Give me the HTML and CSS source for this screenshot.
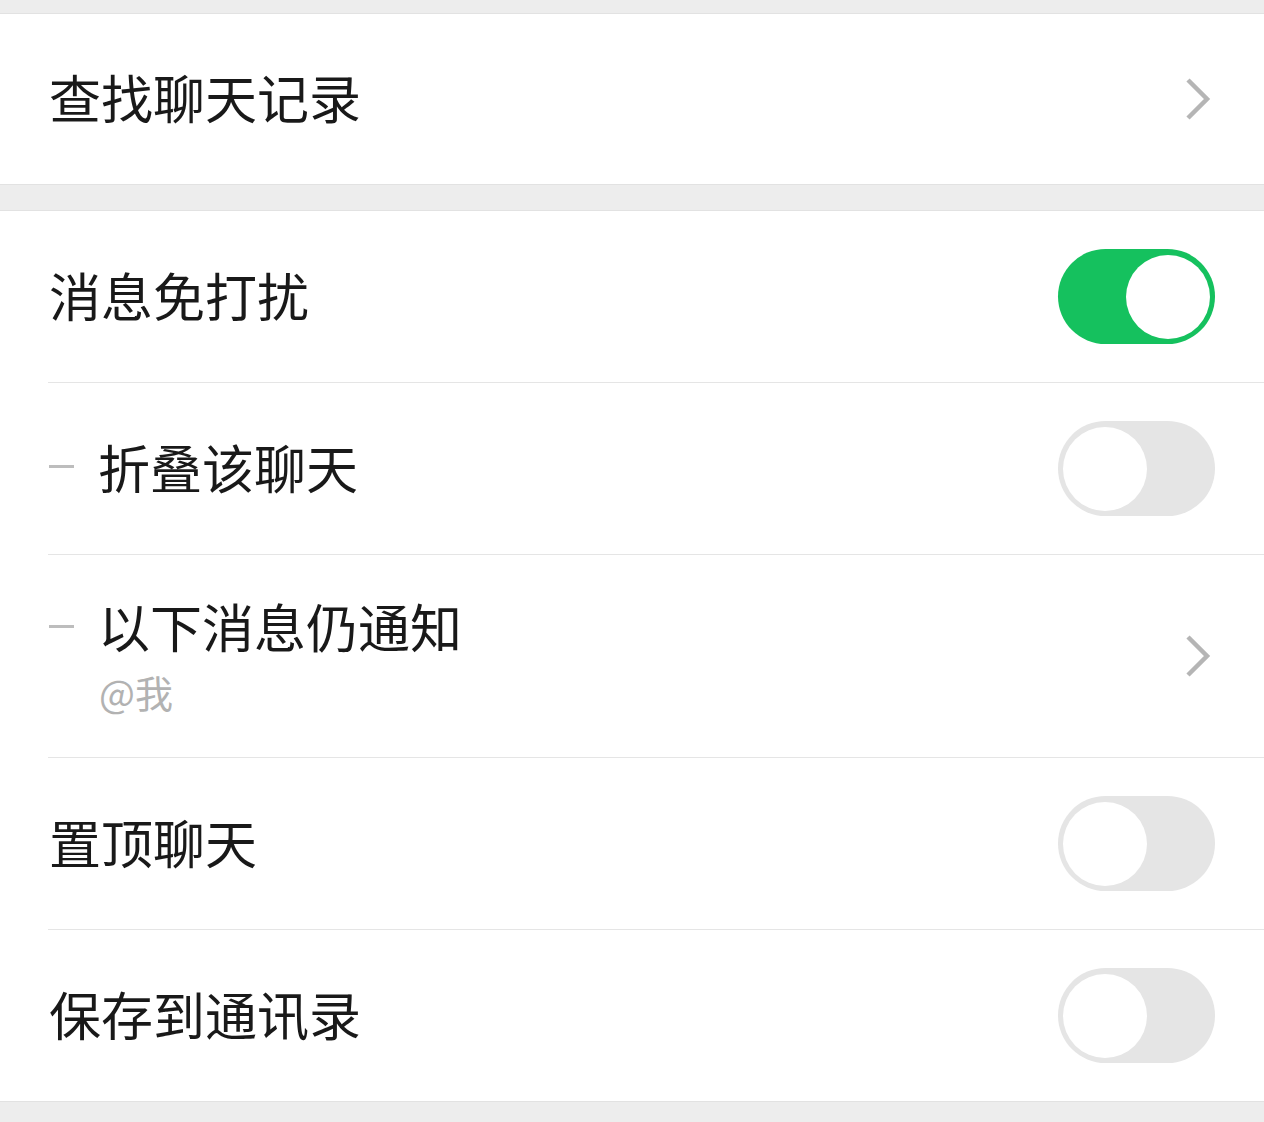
FILE: index.html
```html
<!DOCTYPE html>
<html lang="zh-CN">
<head>
<meta charset="UTF-8" />
<meta name="viewport" content="width=device-width, initial-scale=1" />
<title>聊天信息</title>
<link rel="stylesheet" href="styles.css">
</head>
<body>

<div class="group first">
  <div class="row">
    <div class="row-inner">
      <div class="label">查找聊天记录</div>
      <svg class="chevron" viewBox="0 0 26 42">
        <polyline points="3,2 22,21 3,40" />
      </svg>
    </div>
  </div>
</div>

<div class="group">
  <div class="row">
    <div class="row-inner">
      <div class="label">消息免打扰</div>
      <div class="switch on"><span class="knob"></span></div>
    </div>
  </div>
  <div class="row">
    <div class="row-inner">
      <div class="label"><span class="dash"></span>折叠该聊天</div>
      <div class="switch"><span class="knob"></span></div>
    </div>
  </div>
  <div class="row">
    <div class="row-inner tall">
      <div class="label-block">
        <div class="label title"><span class="dash"></span>以下消息仍通知</div>
        <div class="sub">@我</div>
      </div>
      <svg class="chevron" viewBox="0 0 26 42">
        <polyline points="3,2 22,21 3,40" />
      </svg>
    </div>
  </div>
  <div class="row">
    <div class="row-inner">
      <div class="label">置顶聊天</div>
      <div class="switch"><span class="knob"></span></div>
    </div>
  </div>
  <div class="row">
    <div class="row-inner">
      <div class="label">保存到通讯录</div>
      <div class="switch"><span class="knob"></span></div>
    </div>
  </div>
</div>

</body>
</html>
```

FILE: styles.css
```css
body {
  margin: 0;
  background-color: #ededed;
  font-family: "Noto Sans CJK SC", "Noto Sans", sans-serif;
  color: #191919;
}
.group {
  background: #fff;
  border-top: 1px solid #e2e2e2;
  border-bottom: 1px solid #e2e2e2;
  margin-top: 25px;
}
.group.first {
  margin-top: 13px;
}
.row {
  padding-left: 48px;
}
.row-inner {
  display: flex;
  align-items: center;
  justify-content: space-between;
  height: 171px;
  padding-right: 49px;
}
.group.first .row-inner {
  height: 170px;
}
.row + .row .row-inner {
  border-top: 1px solid #e5e5e5;
}
.row-inner.tall {
  height: 202px;
}
.label {
  display: flex;
  align-items: center;
  font-size: 52px;
  line-height: 72px;
  padding-left: 1px;
  padding-bottom: 4px;
}
.dash {
  width: 25px;
  height: 3px;
  background: #bdbdbd;
  margin-right: 24px;
}
.label-block {
  display: flex;
  flex-direction: column;
}
.label-block .label {
  padding-bottom: 0;
}
.sub {
  font-size: 38px;
  line-height: 60px;
  color: #b2b2b2;
  padding-left: 51px;
}
.chevron {
  width: 26px;
  height: 42px;
  margin-right: 4px;
  fill: none;
  stroke: #b5b5b5;
  stroke-width: 4.5;
}
.switch {
  box-sizing: border-box;
  width: 157px;
  height: 95px;
  border-radius: 48px;
  background: #e5e5e5;
  padding: 5px;
  display: flex;
  justify-content: flex-start;
  align-items: center;
}
.switch.on {
  background: #15c15e;
  justify-content: flex-end;
}
.knob {
  width: 84px;
  height: 84px;
  border-radius: 50%;
  background: #fff;
}
```
